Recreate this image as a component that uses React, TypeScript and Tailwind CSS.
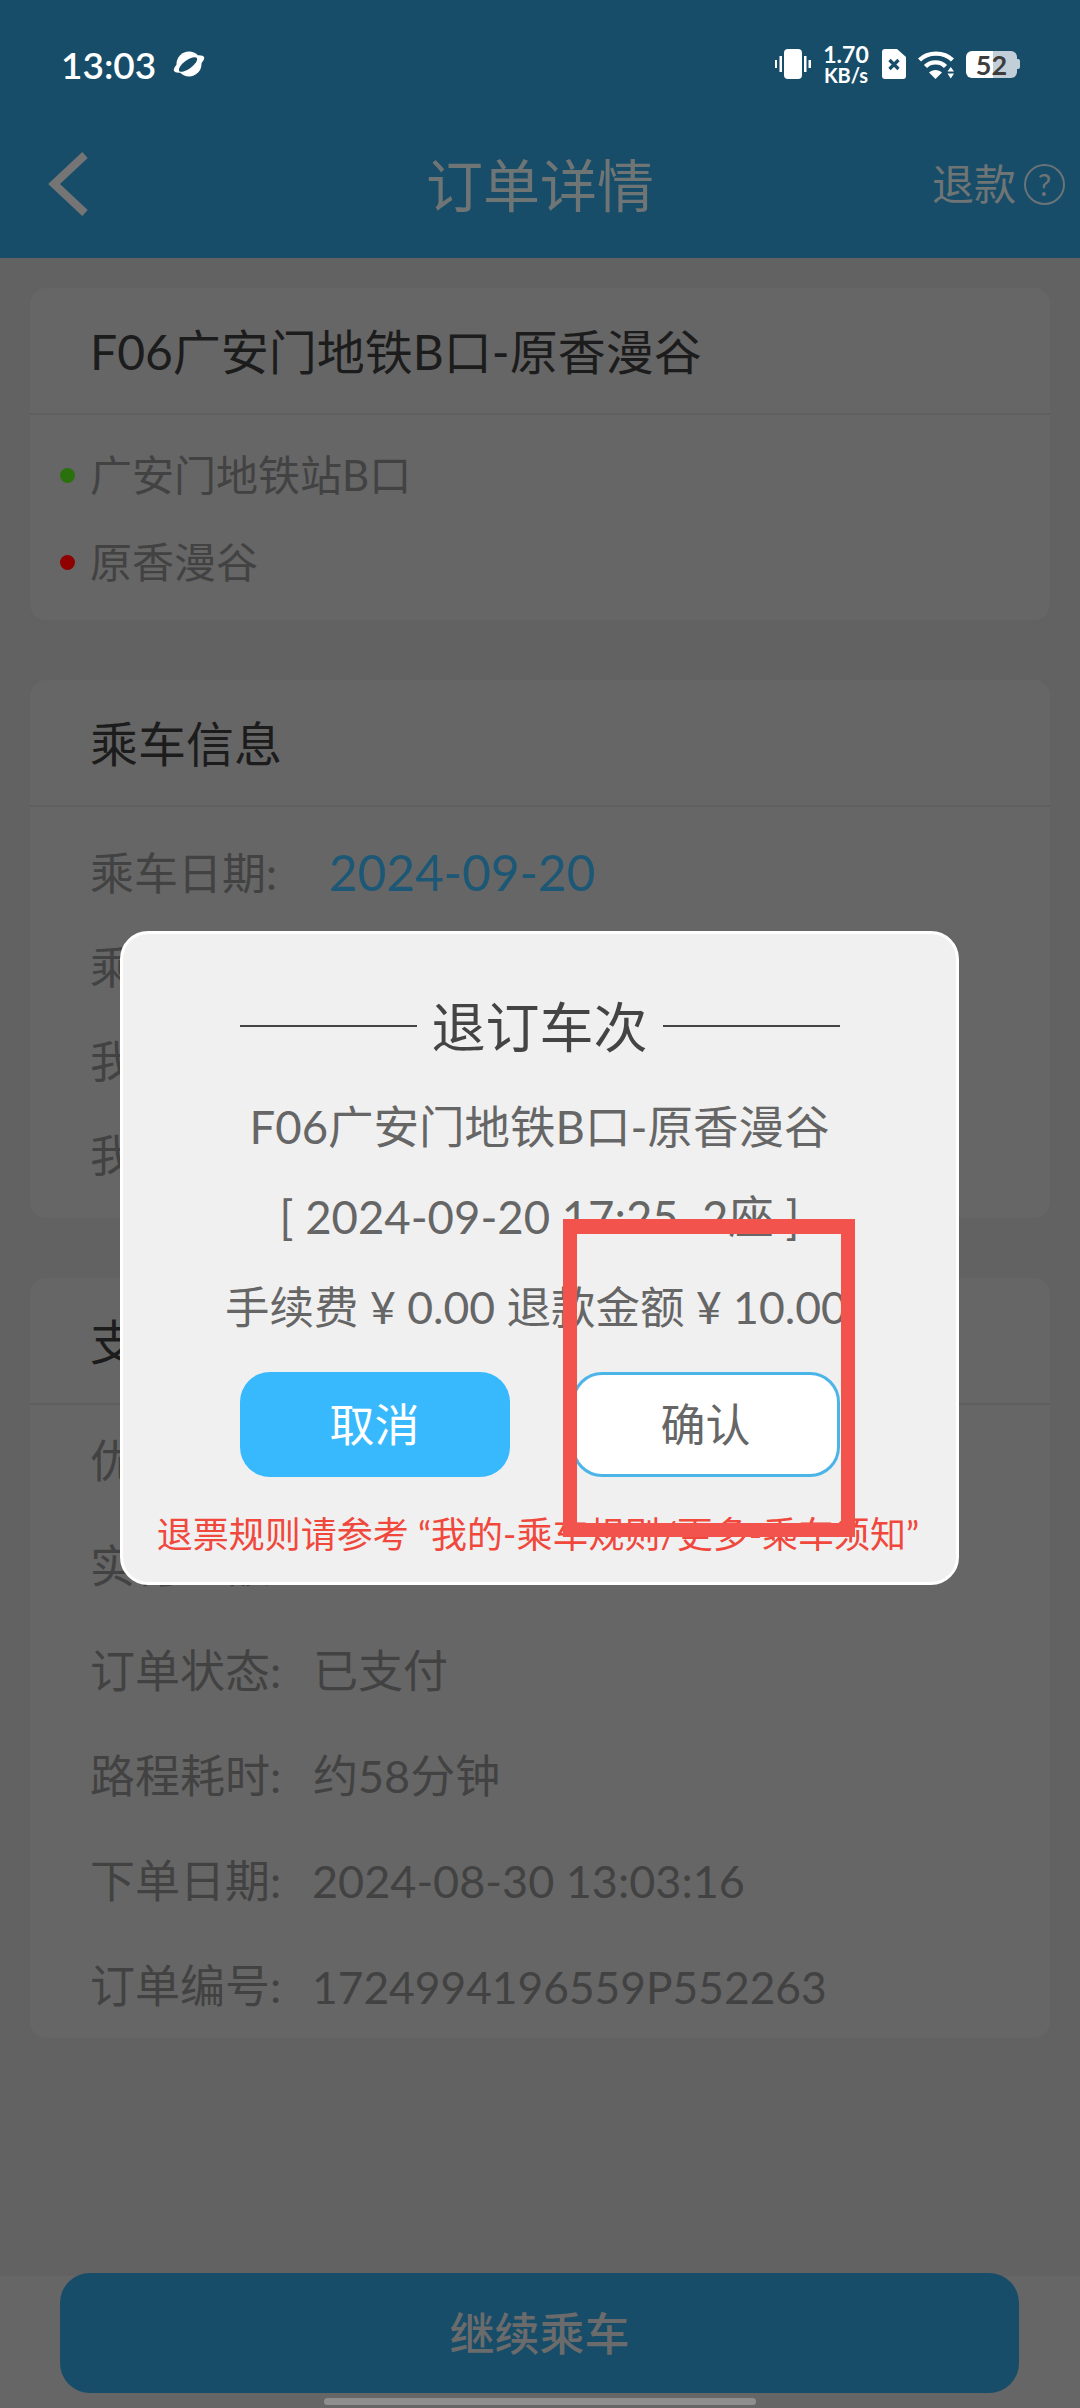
import type { ReactNode } from 'react'

const font = "font-['Lato','Noto_Sans_CJK_SC',sans-serif]"

function PlanetIcon() {
  return (
    <svg width="34" height="26" viewBox="0 0 34 26">
      <ellipse cx="17" cy="13" rx="16.5" ry="6" transform="rotate(-24 17 13)" fill="#fff" />
      <circle cx="17" cy="13" r="12.5" fill="#fff" />
      <ellipse cx="16" cy="13.5" rx="11" ry="4.2" transform="rotate(-36 16 13.5)" fill="#174d69" />
    </svg>
  )
}

function VibrateIcon() {
  return (
    <svg width="36" height="30" viewBox="0 0 36 30" fill="#fff">
      <rect x="9" y="0" width="18" height="30" rx="4" />
      <rect x="0" y="11" width="2" height="8" />
      <rect x="4.5" y="7" width="2.5" height="16" />
      <rect x="29" y="7" width="2.5" height="16" />
      <rect x="33.5" y="11" width="2.5" height="8" />
    </svg>
  )
}

function SimIcon() {
  return (
    <svg width="24" height="30" viewBox="0 0 24 30">
      <path d="M3 0H15L24 8V27A3 3 0 0 1 21 30H3A3 3 0 0 1 0 27V3A3 3 0 0 1 3 0Z" fill="#fff" />
      <path d="M7.5 11L16.5 20M16.5 11L7.5 20" stroke="#174d69" strokeWidth="3.2" />
    </svg>
  )
}

function WifiIcon() {
  return (
    <svg width="36" height="29" viewBox="0 0 36 29" fill="none" stroke="#fff" strokeWidth="4.4">
      <path d="M1.5 10C10 1.5 26 1.5 34.5 10" />
      <path d="M7.5 16.5C12.5 11 22.5 11 27.5 16.5" />
      <path d="M17.5 29L11 22.5C14.5 19 20.5 19 24 22.5Z" fill="#fff" stroke="none" />
      <path d="M29.5 21.5L36 21.5L32.75 17Z M29.5 23.5L36 23.5L32.75 28.5Z" fill="#fff" stroke="none" />
    </svg>
  )
}

function Battery() {
  return (
    <div className="flex items-center">
      <div className="w-[51px] h-[27px] rounded-[6px] flex items-center justify-center bg-[linear-gradient(90deg,#fff_53%,#c3cfd8_53%)] text-[#3d3d3d] text-[27px] font-bold leading-none">
        52
      </div>
      <div className="w-[3px] h-[10px] rounded-r-[2px] bg-[#c3cfd8]" />
    </div>
  )
}

function StatusBar() {
  return (
    <div className="h-[64px] mt-[32px] mb-[14px] pl-[61px] pr-[60px] flex items-center justify-between text-white">
      <div className="flex items-center gap-[16px]">
        <span className="text-[37px] font-semibold leading-none">13:03</span>
        <PlanetIcon />
      </div>
      <div className="flex items-center">
        <VibrateIcon />
        <div className="ml-[12px] w-[46px] flex flex-col items-center font-bold leading-none">
          <span className="text-[23px]">1.70</span>
          <span className="text-[20px] -mt-[1px]">KB/s</span>
        </div>
        <div className="ml-[13px]"><SimIcon /></div>
        <div className="ml-[12px]"><WifiIcon /></div>
        <div className="ml-[12px]"><Battery /></div>
      </div>
    </div>
  )
}

function Card({ title, children, bodyClass }: { title: string; children: ReactNode; bodyClass: string }) {
  return (
    <section className="bg-[#666666] rounded-[16px]">
      <div className="h-[127px] pl-[60px] pt-[3px] flex items-center text-[48px] text-[#1c1c1c] border-b-2 border-[#5f5f5f]">{title}</div>
      <div className={bodyClass}>{children}</div>
    </section>
  )
}

// rows under the dialog only show their first character, so they carry no value
function InfoRow({ label, value, h, labelClass, valueClass }: { label: string; value?: string; h: string; labelClass: string; valueClass?: string }) {
  return (
    <div className={`pl-[60px] pt-[3px] flex items-center whitespace-nowrap text-[#424242] ${h}`}>
      <span className={`shrink-0 ${labelClass}`}>{label}</span>
      {value && <span className={valueClass ?? 'text-[45px]'}>{value}</span>}
    </div>
  )
}

function Stop({ color, name }: { color: string; name: string }) {
  return (
    <div className="h-[87px] pl-[30px] pt-[2px] flex items-center text-[42px] text-[#424242]">
      <span className={`w-[15px] h-[15px] rounded-full ${color}`} />
      <span className="ml-[15px]">{name}</span>
    </div>
  )
}

function Dialog() {
  return (
    <div className="absolute left-[120px] top-[931px] w-[839px] h-[654px] rounded-[28px] border-[3px] border-white bg-[#f0f0f0] pt-[64px] flex flex-col items-center text-[45.5px] text-[#666666] whitespace-pre">
      <div className="h-[56px] w-[600px] flex items-center justify-between">
        <span className="w-[177px] h-[2px] bg-[#444444]" />
        <span className="text-[54px] text-[#444444] pt-[2px]">退订车次</span>
        <span className="w-[177px] h-[2px] bg-[#444444]" />
      </div>
      <div className="mt-[27px] h-[90px] pt-[2px] flex items-center">F06广安门地铁B口-原香漫谷</div>
      <div className="h-[90px] pt-[2px] flex items-center">[ 2024-09-20 17:25  2座 ]</div>
      <div className="h-[90px] pt-[3px] pr-[7px] flex items-center text-[44.5px]">手续费 ¥ 0.00 退款金额 ¥ 10.00</div>
      <div className="mt-[21px] w-[600px] flex justify-between text-[45px]">
        <button className="w-[270px] h-[105px] pt-[3px] rounded-[30px] bg-[#38b9fd] text-white">取消</button>
        <button className="w-[268px] h-[105px] pt-[3px] rounded-[30px] bg-white border-[3px] border-[#4bb5e8] text-[#666666]">确认</button>
      </div>
      <div className="mt-[32px] h-[50px] pr-[3px] flex items-center text-[36px] text-[#f0483c]">退票规则请参考 “我的-乘车规则/更多-乘车须知”</div>
    </div>
  )
}

export default function App() {
  return (
    <div className={`relative w-[1080px] h-[2408px] overflow-hidden flex flex-col bg-[#626262] ${font}`}>
      <header className="h-[258px] bg-[#174d69]">
        <StatusBar />
        <div className="h-[148px] px-[15px] flex items-center">
          <div className="flex-1">
            <svg className="ml-[33px]" width="40" height="64" viewBox="0 0 40 64" fill="none" stroke="#757575" strokeWidth="8">
              <path d="M37 3L6 32L37 61" />
            </svg>
          </div>
          <h1 className="text-[57px] font-normal pt-[3px] text-[#6f7475]">订单详情</h1>
          <div className="flex-1 flex items-center justify-end gap-[8px] text-[42px] text-[#6f7475]">
            <span>退款</span>
            <span className="w-[41px] h-[41px] rounded-full border-2 border-[#6a7377] flex items-center justify-center text-[30px] leading-none">?</span>
          </div>
        </div>
      </header>

      <main className="flex-1 px-[30px] pt-[30px] flex flex-col gap-[60px]">
        <Card title="F06广安门地铁B口-原香漫谷" bodyClass="pt-[16px] pb-[15px]">
          <Stop color="bg-[#2a700c]" name="广安门地铁站B口" />
          <Stop color="bg-[#8f0000]" name="原香漫谷" />
        </Card>
        <Card title="乘车信息" bodyClass="pt-[17px] pb-[18px]">
          <InfoRow label="乘车日期:" value="2024-09-20" h="h-[94px]" labelClass="w-[239px] text-[44px]" valueClass="text-[49.5px] text-[#1c5876]" />
          <InfoRow label="乘车时间:" h="h-[94px]" labelClass="w-[239px] text-[44px]" />
          <InfoRow label="我的座位:" h="h-[94px]" labelClass="w-[239px] text-[44px]" />
          <InfoRow label="我的票价:" h="h-[94px]" labelClass="w-[239px] text-[44px]" />
        </Card>
        <Card title="支付信息" bodyClass="pt-[3px]">
          <InfoRow label="优惠金额:" h="h-[105px]" labelClass="w-[223px] text-[45px]" />
          <InfoRow label="实付金额:" h="h-[105px]" labelClass="w-[223px] text-[45px]" />
          <InfoRow label="订单状态:" value="已支付" h="h-[105px]" labelClass="w-[223px] text-[45px]" />
          <InfoRow label="路程耗时:" value="约58分钟" h="h-[105px]" labelClass="w-[223px] text-[45px]" />
          <InfoRow label="下单日期:" value="2024-08-30 13:03:16" h="h-[105px]" labelClass="w-[222px] text-[45px]" />
          <InfoRow label="订单编号:" value="1724994196559P552263" h="h-[105px]" labelClass="w-[222px] text-[45px]" valueClass="text-[44.3px]" />
        </Card>
      </main>

      <footer className="h-[132px] bg-[#666666]">
        <button className="block -mt-[3px] ml-[60px] w-[959px] h-[120px] pt-[3px] rounded-[30px] bg-[#174d69] text-[45px] font-medium text-[#6b6b6b]">继续乘车</button>
        <div className="mt-[5px] mx-auto w-[432px] h-[7px] rounded-full bg-[#8f8f8f]" />
      </footer>

      <Dialog />
      <div className="absolute left-[563px] top-[1219px] w-[292px] h-[318px] border-[14px] border-t-[15px] border-[#f2544d]" />
    </div>
  )
}
